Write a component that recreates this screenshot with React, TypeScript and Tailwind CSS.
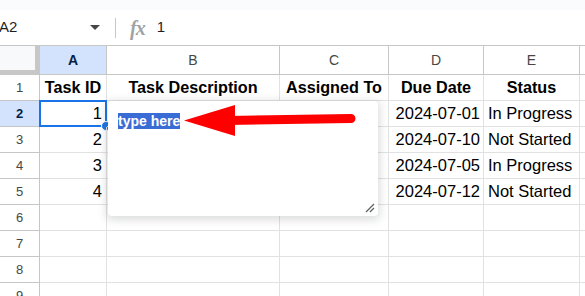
const rows = [
  ['Task ID', 'Task Description', 'Assigned To', 'Due Date', 'Status'],
  ['1', '', '', '2024-07-01', 'In Progress'],
  ['2', '', '', '2024-07-10', 'Not Started'],
  ['3', '', '', '2024-07-05', 'In Progress'],
  ['4', '', '', '2024-07-12', 'Not Started'],
  ['', '', '', '', ''],
  ['', '', '', '', ''],
  ['', '', '', '', ''],
  ['', '', '', '', ''],
]

const letters = ['A', 'B', 'C', 'D', 'E']
const widths = ['w-[67px]', 'w-[173px]', 'w-[109px]', 'w-[95px]', 'w-[96px]']
const align = ['justify-end pr-[4px]', 'justify-start pl-[4px]', 'justify-start pl-[4px]', 'justify-end pr-[3px]', 'justify-start pl-[4px]']

export default function App() {
  return (
    <div className="relative w-[585px] h-[296px] overflow-hidden bg-white font-['Liberation_Sans',Arial,sans-serif] text-black">
      {/* top strip */}
      <div className="h-[10px] bg-[#f9fbfd]" />

      {/* formula bar */}
      <div className="flex items-center h-[35px]">
        <div className="flex items-center w-[106px] h-full">
          <span className="text-[15px] text-[#1f1f1f] -ml-[1px]">A2</span>
          <svg width="10" height="6" viewBox="0 0 10 6" className="ml-auto mr-[6px]">
            <polygon points="0,0 10,0 5,5" fill="#444746" />
          </svg>
        </div>
        <div className="ml-[9px] w-px h-[20px] bg-[#c4c7c5]" />
        <span className="ml-[14px] text-[20px] italic text-[#a0a3a6] font-['Liberation_Serif',serif] font-bold tracking-[-1px]">
          fx
        </span>
        <span className="ml-[12px] text-[15px] text-[#1f1f1f]">1</span>
      </div>

      {/* column headers */}
      <div className="flex h-[30px] border-t border-[#c4c7c5]">
        <div className="w-[40px] h-full bg-[#f8f9fa] border-r-[5px] border-b-[5px] border-[#c7c7c7]" />
        {letters.map((l, i) => (
          <div
            key={l}
            className={`${widths[i]} h-full flex items-center justify-center text-[14px] border-r border-b border-[#c4c7c5] ${
              i === 0 ? 'bg-[#d3e3fd] text-[#041e49] font-bold' : 'text-[#444746]'
            }`}
          >
            {l}
          </div>
        ))}
        <div className="flex-1 h-full border-b border-[#c4c7c5]" />
      </div>

      {/* grid rows */}
      {rows.map((r, ri) => (
        <div key={ri} className="flex h-[26px]">
          <div
            className={`w-[40px] h-full flex items-center justify-center text-[13px] border-r border-b border-[#c4c7c5] ${
              ri === 1 ? 'bg-[#d3e3fd] text-[#041e49] font-bold' : 'text-[#444746]'
            }`}
          >
            {ri + 1}
          </div>
          {r.map((c, ci) => (
            <div
              key={ci}
              className={`${widths[ci]} relative h-full flex items-center border-r border-b border-[#e1e1e1] whitespace-nowrap ${
                ri === 0 ? 'justify-center font-bold text-[16.2px]' : `${align[ci]} text-[16.5px]`
              }`}
            >
              {c}
              {ri === 1 && ci === 0 && (
                <>
                  <div className="absolute -left-px -top-px -right-px -bottom-px border-2 border-[#1a73e8]" />
                  <div className="absolute -right-[5px] -bottom-[5px] w-[10px] h-[10px] rounded-full bg-[#1a73e8] border border-white" />
                </>
              )}
            </div>
          ))}
          <div className="flex-1 h-full border-b border-[#e1e1e1]" />
        </div>
      ))}

      {/* cell editor popup */}
      <div className="absolute left-[108px] top-[101px] w-[270px] h-[115px] bg-white rounded-[4px] shadow-[0_2px_8px_2px_rgba(60,64,67,0.18)]">
        <div className="absolute left-[10px] top-[12px] bg-[#3a6cd6] text-white font-bold text-[14px] leading-[16px]">
          type here
        </div>
        <svg width="10" height="10" viewBox="0 0 10 10" className="absolute right-[3px] bottom-[3px]">
          <line x1="1" y1="9" x2="9" y2="1" stroke="#5f6368" strokeWidth="1.2" />
          <line x1="5" y1="9" x2="9" y2="5" stroke="#5f6368" strokeWidth="1.2" />
        </svg>
      </div>

      {/* red arrow annotation */}
      <svg width="585" height="296" viewBox="0 0 585 296" className="absolute left-0 top-0 pointer-events-none">
        <line x1="228" y1="120.5" x2="351" y2="118.5" stroke="#ff0000" strokeWidth="9" strokeLinecap="round" />
        <polygon points="184,120.5 235,105 235,136" fill="#ff0000" />
      </svg>
    </div>
  )
}
